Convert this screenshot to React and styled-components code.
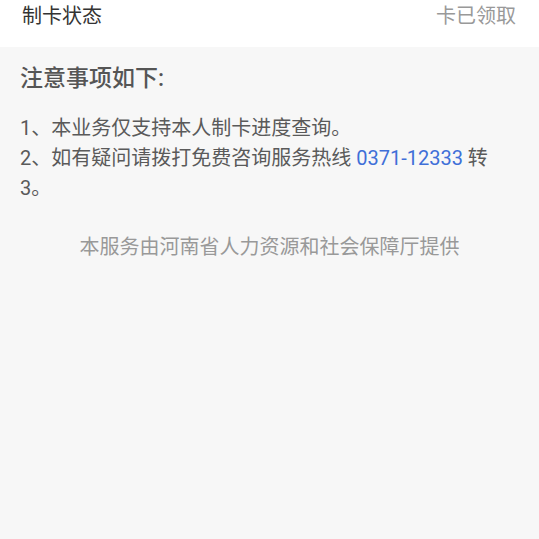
import styled, { createGlobalStyle } from "styled-components"

const GlobalStyle = createGlobalStyle`
    html, body {
        margin: 0;
        padding: 0;
        background-color: #f7f7f7;
    }
    body {
        font-family: Roboto, "Noto Sans CJK SC", sans-serif;
        text-spacing-trim: space-all;
        text-autospace: no-autospace;
    }
`

export default function App() {
    return (
        <Page>
            <GlobalStyle />
            <StatusBar>
                <Label>制卡状态</Label>
                <Value>卡已领取</Value>
            </StatusBar>
            <Notice>
                <Title>注意事项如下:</Title>
                <List>
                    <Item>1、本业务仅支持本人制卡进度查询。</Item>
                    <Item>
                        2、如有疑问请拨打免费咨询服务热线 <Phone>0371-12333</Phone> 转 3。
                    </Item>
                </List>
                <Footer>本服务由河南省人力资源和社会保障厅提供</Footer>
            </Notice>
        </Page>
    )
}

const Page = styled.div`
    width: 100%;
    min-height: 100vh;
    background-color: #f7f7f7;
`
const StatusBar = styled.div`
    height: 47px;
    box-sizing: border-box;
    background-color: #ffffff;
    display: flex;
    justify-content: space-between;
    align-items: flex-start;
    padding: 0 23px 0 22px;
    font-size: 20px;
    line-height: 33px;
`
const Label = styled.span`
    color: #333333;
`
const Value = styled.span`
    color: #999999;
`
const Notice = styled.div`
    padding: 17px 20px 0;
`
const Title = styled.h2`
    margin: 0;
    font-size: 23px;
    font-weight: 500;
    line-height: 30px;
    color: #555555;
`
const List = styled.div`
    margin-top: 19px;
    font-size: 20px;
    line-height: 30px;
    color: #5a5a5a;
`
const Item = styled.p`
    margin: 0;
`
const Phone = styled.span`
    color: #3f6fd8;
`
const Footer = styled.p`
    margin: 29px 0 0;
    text-align: center;
    font-size: 20px;
    line-height: 30px;
    color: #999999;
`
